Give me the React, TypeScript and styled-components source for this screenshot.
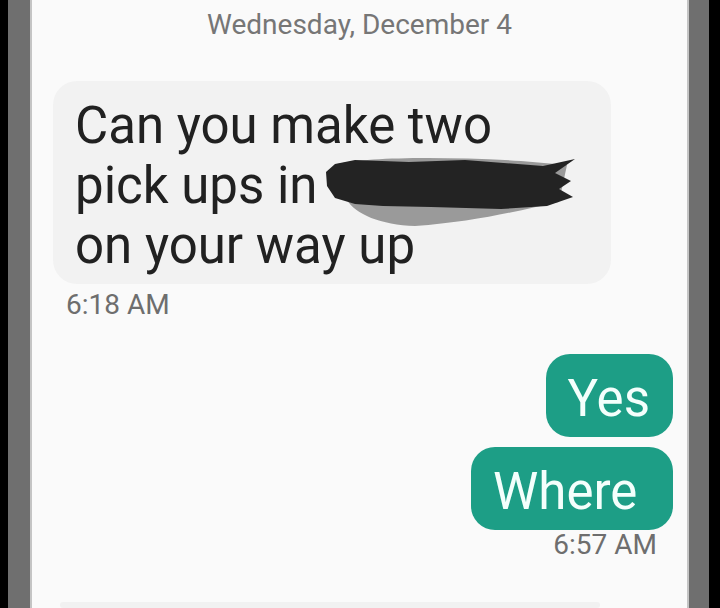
import styled, { createGlobalStyle } from "styled-components";

const GlobalStyle = createGlobalStyle`
  html, body {
    margin: 0;
    padding: 0;
    background: #000;
  }
  body {
    font-family: Roboto, "Noto Sans", "Liberation Sans", sans-serif;
  }
`;

const Screen = styled.div`
  display: flex;
  width: 720px;
  height: 608px;
  overflow: hidden;
  background: #000;
`;

const Edge = styled.div<{ $w: number; $color: string }>`
  flex: 0 0 ${(p) => p.$w}px;
  background: ${(p) => p.$color};
`;

const Thread = styled.div`
  flex: 1;
  display: flex;
  flex-direction: column;
  background: #fafafa;
  border-left: 2px solid #c4c4c4;
  border-right: 2px solid #c4c4c4;
  padding-top: 8px;
`;

const DateLabel = styled.div`
  text-align: center;
  font-size: 28px;
  line-height: 34px;
  color: #767676;
  margin-bottom: 39px;
`;

const Group = styled.div<{ $out?: boolean }>`
  display: flex;
  flex-direction: column;
  align-items: ${(p) => (p.$out ? "flex-end" : "flex-start")};
  gap: 10px;
  padding: ${(p) => (p.$out ? "0 14px 0 0" : "0 0 0 21px")};
  margin-bottom: 32px;
`;

const Bubble = styled.div<{ $out?: boolean; $width?: number }>`
  box-sizing: border-box;
  width: ${(p) => (p.$width ? `${p.$width}px` : "auto")};
  padding: 15px 23px 8px 22px;
  border-radius: 24px;
  font-size: 51px;
  line-height: 60px;
  white-space: pre;
  background: ${(p) => (p.$out ? "#1d9e86" : "#f2f2f2")};
  color: ${(p) => (p.$out ? "#f4fffc" : "#212121")};
`;

const Line = styled.div`
  display: flex;
  align-items: center;
  height: 60px;
  white-space: nowrap;
`;

const Redacted = styled.svg`
  flex: 0 0 auto;
  margin: 14px 0 0 7px;
`;

const Time = styled.div<{ $out?: boolean }>`
  font-size: 28px;
  line-height: 34px;
  color: #6e6e6e;
  margin-top: ${(p) => (p.$out ? "-12px" : "-6px")};
  padding: ${(p) => (p.$out ? "0 16px 0 0" : "0 0 0 13px")};
`;

const NextBubble = styled.div`
  margin: 8px 87px 0 28px;
  height: 60px;
  border-radius: 24px;
  background: #f1f1f1;
`;

function Scribble() {
  return (
    <Redacted width="254" height="74" viewBox="0 0 254 74">
      <path
        d="M12 8 C 40 1, 120 0, 196 5 L 242 9 L 234 46 C 196 54, 150 66, 90 70 C 56 69, 30 58, 22 44 Z"
        fill="#9a9a9a"
      />
      <path
        d="M1 16 L 10 8 L 30 4 L 84 6 L 140 4 L 218 10 L 250 3 L 230 17 L 246 25 L 234 33 L 248 41 L 222 50 L 176 53 L 106 51 L 58 50 L 30 48 L 10 42 L 2 30 Z"
        fill="#232323"
      />
    </Redacted>
  );
}

export default function App() {
  return (
    <>
      <GlobalStyle />
      <Screen>
        <Edge $w={8} $color="#000" />
        <Edge $w={22} $color="#6f6f6f" />
        <Thread>
          <DateLabel>Wednesday, December 4</DateLabel>
          <Group>
            <Bubble $width={558}>
              <Line>Can you make two</Line>
              <Line>
                pick ups in
                <Scribble />
              </Line>
              <Line>on your way up</Line>
            </Bubble>
            <Time>6:18 AM</Time>
          </Group>
          <Group $out>
            <Bubble $out>Yes</Bubble>
            <Bubble $out>{"Where "}</Bubble>
            <Time $out>6:57 AM</Time>
          </Group>
          <NextBubble />
        </Thread>
        <Edge $w={20} $color="#6f6f6f" />
        <Edge $w={11} $color="#000" />
      </Screen>
    </>
  );
}
